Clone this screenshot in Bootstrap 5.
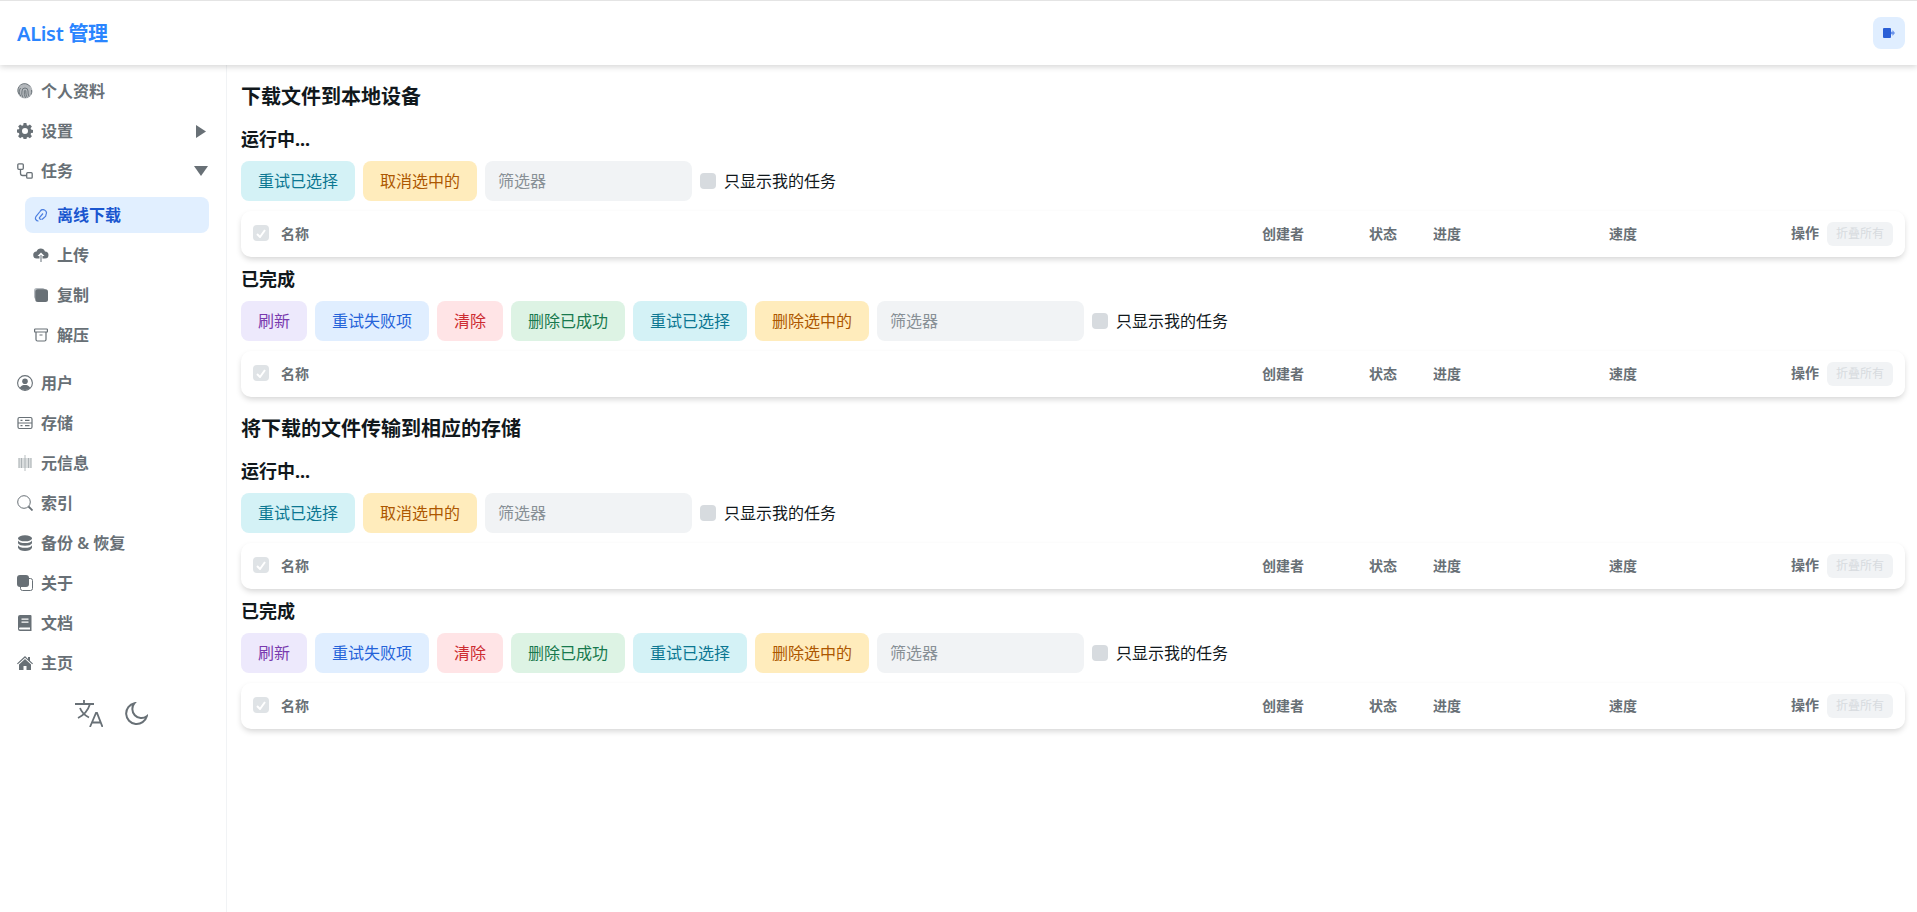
<!DOCTYPE html>
<html lang="zh-CN">
<head>
<meta charset="utf-8">
<title>AList 管理</title>
<link href="https://cdn.jsdelivr.net/npm/bootstrap@5.3.0/dist/css/bootstrap.min.css" rel="stylesheet">
<style>
html,body{height:100%;}
body{font-family:"Noto Sans","Noto Sans CJK SC",sans-serif;font-size:16px;color:#11181c;background:#fff;overflow:hidden;}
.top-bar{height:65px;border-top:1px solid #e4e4e4;box-shadow:0 2px 6px rgba(0,0,0,.16);position:relative;z-index:2;padding:0 12px 0 17px;background:#fff;}
.brand-name{font-size:20px;font-weight:600;color:#2a85ff;letter-spacing:-.3px;padding-top:2px;}
.logout-btn{width:32px;height:32px;border-radius:8px;background:#e0eeff;border:0;padding:0;}
.page-body{height:847px;}
.side-menu{width:227px;flex:none;border-right:1px solid #f1f3f5;padding:6px 0 0 0;}
.menu-row{height:40px;padding:0 17px;color:#687076;font-weight:600;font-size:16px;gap:8px;}
.menu-row svg.ic{width:16px;height:16px;flex:none;}
.menu-arrow{margin-left:auto;margin-right:1px;}
.arrow-side{margin-right:3px;}
.sub-menu{padding:6px 0;}
.sub-row{height:36px;margin:0 0 4px 25px;padding:0 8px;border-radius:8px;color:#687076;font-weight:600;gap:8px;width:184px;}
.sub-row svg{width:16px;flex:none;}
.sub-row.active-row{background:#e1efff;color:#1a56cf;}
.side-tools{gap:22px;padding:17px 3px 0 0;color:#687076;}
.work-area{flex:1;min-width:0;padding:17px 12px 0 14px;}
.sec-title{font-size:20px;font-weight:700;line-height:30px;margin:0 0 15px;}
.sub-title{font-size:18px;font-weight:700;line-height:24px;margin:0 0 10px;}
.tool-row{gap:8px;margin-bottom:10px;}
.act-btn{height:40px;border:0;border-radius:8px;padding:0 17px;font-size:16px;}
.tone-violet{background:#ede9fc;color:#793aaf;}
.tone-blue{background:#e0eeff;color:#2563d9;}
.tone-red{background:#ffe4e6;color:#cd2b31;}
.tone-green{background:#ddf3e4;color:#18794e;}
.tone-cyan{background:#d4f2f6;color:#0c7792;}
.tone-amber{background:#ffecbc;color:#ad5700;}
.filter-input{width:207px;height:40px;border:0;border-radius:8px;background:#f1f3f5;padding:0 13px;font-size:16px;}
.filter-input::placeholder{color:#889096;opacity:1;}
.mine-check{width:16px;height:16px;border-radius:4px;background:#d7dbdf;flex:none;}
.mine-label{gap:8px;color:#11181c;}
.task-card{height:46px;border-radius:10px;background:#fff;box-shadow:0 3px 6px -1px rgba(0,0,0,.18);padding:0 12px 2px;margin-bottom:10px;color:#687076;font-size:14px;font-weight:700;}
.head-check{width:16px;height:16px;border-radius:4px;background:#dfe3e6;flex:none;margin-right:12px;}
.cell-name{flex:1;}
.cell-owner{width:107px;flex:none;}
.cell-state{width:64px;flex:none;}
.cell-prog{width:176px;flex:none;}
.cell-speed{width:182px;flex:none;}
.cell-ops{width:102px;flex:none;gap:8px;}
.fold-btn{width:66px;height:24px;border:0;border-radius:6px;background:#f1f3f5;color:#d7dbdf;font-size:12px;padding:0;margin-top:1px;font-weight:400;}
.ops-label{position:relative;top:-1px;}
.group-gap{margin-top:17px;}
</style>
</head>
<body>
<header class="top-bar d-flex align-items-center justify-content-between">
  <span class="brand-name">AList 管理</span>
  <button class="logout-btn d-flex align-items-center justify-content-center" aria-label="退出">
    <svg width="12" height="10" viewBox="0 0 12 10"><rect x="0" y="0" width="8" height="10" rx="1" fill="#2a5fd6"/><path d="M8 3.800h1.500V2L12 5 9.500 8V6.200H8z" fill="#6c95ea"/></svg>
  </button>
</header>
<div class="page-body d-flex">
  <nav class="side-menu d-flex flex-column">
    <div class="menu-row d-flex align-items-center">
      <svg class="ic" viewBox="0 0 16 16" fill="none" stroke="#687076" stroke-width=".9"><circle cx="8" cy="8" r="7.500" fill="#b4b8bc" stroke="none"/><path d="M2 11A6.500 6.500 0 0 1 13 3.500M3.800 13A6 6 0 0 1 3.600 5M14 11.500A6.500 6.500 0 0 0 14.500 7M6 14.500A8 8 0 0 1 5 8a3 3 0 0 1 6 0c0 2 .2 4 1 5.500M8.500 15A12 12 0 0 1 7.300 8a.8.8 0 0 1 1.500 0c0 3 .5 5 1.500 6.500"/></svg>
      <span>个人资料</span></div>
    <div class="menu-row d-flex align-items-center">
      <svg class="ic" viewBox="0 0 16 16" fill="#687076"><path fill-rule="evenodd" d="M6.600 0h2.800l.4 2.200 1.200.5L12.900 1.400l2 2-1.300 1.900.5 1.200 1.900.4v2.800l-1.900.4-.5 1.200 1.300 1.900-2 2-1.900-1.300-1.200.5-.4 2.200H6.600l-.4-2.200-1.200-.5-1.900 1.300-2-2 1.300-1.900-.5-1.200L0 9.400V6.600l1.900-.4.500-1.200L1.100 3.400l2-2L5 2.700l1.200-.5zM8 5a3 3 0 1 0 0 6 3 3 0 0 0 0-6z"/></svg>
      <span>设置</span>
      <svg class="menu-arrow arrow-side" width="10" height="13" viewBox="0 0 10 13"><path d="M0 0l10 6.500L0 13z" fill="#687076"/></svg></div>
    <div class="menu-row d-flex align-items-center">
      <svg class="ic" viewBox="0 0 16 16" fill="none" stroke="#687076" stroke-width="1.300"><rect x=".8" y=".8" width="5.500" height="5.500" rx="1"/><rect x="9.700" y="9.700" width="5.500" height="5.500" rx="1"/><path d="M3.500 6.300v4q0 2.200 2.200 2.200h4"/></svg>
      <span>任务</span>
      <svg class="menu-arrow" width="14" height="10" viewBox="0 0 14 10"><path d="M0 0h14L7 10z" fill="#687076"/></svg></div>
    <div class="sub-menu">
      <div class="sub-row active-row d-flex align-items-center">
        <svg height="13" viewBox="0 0 13 13" fill="none" stroke="#4c7fe0" stroke-width="1.200"><path d="M4 12a2.800 2.800 0 0 1-2.600-4.300L5.500 2.500A3.300 3.300 0 0 1 11.500 5.500a3 3 0 0 1-1.500 2.700L7.500 10.500M8.500 4.500L5 8.500a1.300 1.300 0 0 0 2 1.500"/></svg>
        <span>离线下载</span></div>
      <div class="sub-row d-flex align-items-center">
        <svg height="14" viewBox="0 0 16 14"><path d="M4 10.500a3.500 3.500 0 0 1-.5-7A4.500 4.500 0 0 1 12 3.500a3.500 3.500 0 0 1 0 7H9.500V8h2L8 4.500 4.500 8h2v2.500z" fill="#687076"/><rect x="7.200" y="7" width="1.600" height="7" fill="#a0a6ab"/></svg>
        <span>上传</span></div>
      <div class="sub-row d-flex align-items-center">
        <svg height="14" viewBox="0 0 14 14"><rect x="0" y="0" width="11" height="11" rx="2.500" fill="#b5babf"/><rect x="1.300" y="1.300" width="12.700" height="12.700" rx="2.500" fill="#687076"/></svg>
        <span>复制</span></div>
      <div class="sub-row d-flex align-items-center">
        <svg height="14" viewBox="0 0 14 14" fill="none" stroke="#687076" stroke-width="1.200"><rect x=".6" y="1" width="12.800" height="3" rx=".6"/><path d="M2 4v7.500a1.500 1.500 0 0 0 1.500 1.500h7a1.500 1.500 0 0 0 1.500-1.500V4M5.500 7h3"/></svg>
        <span>解压</span></div>
    </div>
    <div class="menu-row d-flex align-items-center">
      <svg class="ic" viewBox="0 0 16 16"><circle cx="8" cy="8" r="7.400" fill="none" stroke="#687076" stroke-width="1.100"/><circle cx="8" cy="6.200" r="2.800" fill="#687076"/><path d="M2.800 12.800C4 10.500 6 10 8 10s4 .5 5.200 2.800A7 7 0 0 1 2.800 12.800z" fill="#687076"/></svg>
      <span>用户</span></div>
    <div class="menu-row d-flex align-items-center">
      <svg class="ic" viewBox="0 0 16 16" fill="none" stroke="#687076" stroke-width="1.200"><rect x="1" y="2.500" width="14" height="11" rx="1.500"/><path d="M1 8h14M3.500 5.300h2M3.500 10.700h2M8 5.300h4.500M8 10.700h4.500"/></svg>
      <span>存储</span></div>
    <div class="menu-row d-flex align-items-center">
      <svg class="ic" viewBox="0 0 16 16" fill="none" stroke="#9aa0a5" stroke-width=".7"><path d="M1.500 4h13M1.500 6h13M1.500 8h13M1.500 10h13M1.500 12h13M2 3v10M4.500 3v10M8 0v16M11.500 3v10M14 3v10"/></svg>
      <span>元信息</span></div>
    <div class="menu-row d-flex align-items-center">
      <svg class="ic" viewBox="0 0 16 16" fill="none" stroke="#687076"><circle cx="7" cy="7" r="6.300" stroke-width="1"/><path d="M11.500 11.500L15.500 15.500" stroke-width="1.800"/></svg>
      <span>索引</span></div>
    <div class="menu-row d-flex align-items-center">
      <svg class="ic" viewBox="0 0 16 16" fill="#687076"><ellipse cx="8" cy="3.300" rx="7" ry="3"/><path d="M1 5.500c1 2 3.500 2.600 7 2.600s6-.6 7-2.600v2.800c-.8 1.700-3.500 2.500-7 2.500s-6.200-.8-7-2.500zM1 10.300c1 1.900 3.500 2.500 7 2.500s6-.6 7-2.500v2.500C14 14.900 11.500 16 8 16s-6-1.100-7-3.200z"/></svg>
      <span>备份 &amp; 恢复</span></div>
    <div class="menu-row d-flex align-items-center">
      <svg class="ic" viewBox="0 0 16 16"><rect x="3.500" y="3.500" width="12" height="12" rx="2" fill="none" stroke="#687076"/><rect x="0" y="0" width="12" height="12" rx="3" fill="#687076"/></svg>
      <span>关于</span></div>
    <div class="menu-row d-flex align-items-center">
      <svg class="ic" viewBox="0 0 16 16" fill="#687076"><path fill-rule="evenodd" d="M3 0h10.500a1 1 0 0 1 1 1v15H3a2 2 0 0 1-2-2V2a2 2 0 0 1 2-2zM4.500 3.500v1.200h7V3.500zm0 3v1.200h7V6.500zM3 12.500a1 1 0 0 0 0 2h10v-2z"/></svg>
      <span>文档</span></div>
    <div class="menu-row d-flex align-items-center">
      <svg class="ic" viewBox="0 0 16 16" fill="#687076"><path d="M8 1L0 8.500l.8.800L8 2.800l7.200 6.500.8-.8-3-2.700V2h-2v2z"/><path d="M8 4L2 9.500V15h4.500v-4h3v4H14V9.500z"/></svg>
      <span>主页</span></div>
    <div class="side-tools d-flex justify-content-center align-items-center">
      <svg width="28" height="27" viewBox="0 0 28 27" fill="none" stroke="#687076" stroke-width="1.800"><path d="M0 4h19M9 0v4M15 4c-1.500 5-6 11-12 14M5 8c1.500 4 5 7.500 9 9.500M15 27l6-14h1l5.500 14M17 22.500h9"/></svg>
      <svg width="23" height="23" viewBox="0 0 23 23" fill="none" stroke="#687076" stroke-width="2"><path d="M9.500 1.200a10.500 10.500 0 1 0 12.300 13A9 9 0 0 1 9.500 1.200z"/></svg>
    </div>
  </nav>
  <main class="work-area">
    <h2 class="sec-title">下载文件到本地设备</h2>
    <h3 class="sub-title">运行中...</h3>
    <div class="tool-row d-flex align-items-center">
      <button class="act-btn tone-cyan">重试已选择</button>
      <button class="act-btn tone-amber">取消选中的</button>
      <input class="filter-input" placeholder="筛选器">
      <label class="mine-label d-flex align-items-center"><span class="mine-check"></span>只显示我的任务</label>
    </div>
    <div class="task-card d-flex align-items-center">
      <span class="head-check d-flex align-items-center justify-content-center"><svg width="10" height="9" viewBox="0 0 10 9" fill="none" stroke="#fff" stroke-width="2"><path d="M1 5l3 3 5-7"/></svg></span>
      <span class="cell-name">名称</span><span class="cell-owner">创建者</span><span class="cell-state">状态</span><span class="cell-prog">进度</span><span class="cell-speed">速度</span>
      <span class="cell-ops d-flex align-items-center"><span class="ops-label">操作</span><button class="fold-btn">折叠所有</button></span>
    </div>
    <h3 class="sub-title">已完成</h3>
    <div class="tool-row d-flex align-items-center">
      <button class="act-btn tone-violet">刷新</button>
      <button class="act-btn tone-blue">重试失败项</button>
      <button class="act-btn tone-red">清除</button>
      <button class="act-btn tone-green">删除已成功</button>
      <button class="act-btn tone-cyan">重试已选择</button>
      <button class="act-btn tone-amber">删除选中的</button>
      <input class="filter-input" placeholder="筛选器">
      <label class="mine-label d-flex align-items-center"><span class="mine-check"></span>只显示我的任务</label>
    </div>
    <div class="task-card d-flex align-items-center">
      <span class="head-check d-flex align-items-center justify-content-center"><svg width="10" height="9" viewBox="0 0 10 9" fill="none" stroke="#fff" stroke-width="2"><path d="M1 5l3 3 5-7"/></svg></span>
      <span class="cell-name">名称</span><span class="cell-owner">创建者</span><span class="cell-state">状态</span><span class="cell-prog">进度</span><span class="cell-speed">速度</span>
      <span class="cell-ops d-flex align-items-center"><span class="ops-label">操作</span><button class="fold-btn">折叠所有</button></span>
    </div>
    <h2 class="sec-title group-gap">将下载的文件传输到相应的存储</h2>
    <h3 class="sub-title">运行中...</h3>
    <div class="tool-row d-flex align-items-center">
      <button class="act-btn tone-cyan">重试已选择</button>
      <button class="act-btn tone-amber">取消选中的</button>
      <input class="filter-input" placeholder="筛选器">
      <label class="mine-label d-flex align-items-center"><span class="mine-check"></span>只显示我的任务</label>
    </div>
    <div class="task-card d-flex align-items-center">
      <span class="head-check d-flex align-items-center justify-content-center"><svg width="10" height="9" viewBox="0 0 10 9" fill="none" stroke="#fff" stroke-width="2"><path d="M1 5l3 3 5-7"/></svg></span>
      <span class="cell-name">名称</span><span class="cell-owner">创建者</span><span class="cell-state">状态</span><span class="cell-prog">进度</span><span class="cell-speed">速度</span>
      <span class="cell-ops d-flex align-items-center"><span class="ops-label">操作</span><button class="fold-btn">折叠所有</button></span>
    </div>
    <h3 class="sub-title">已完成</h3>
    <div class="tool-row d-flex align-items-center">
      <button class="act-btn tone-violet">刷新</button>
      <button class="act-btn tone-blue">重试失败项</button>
      <button class="act-btn tone-red">清除</button>
      <button class="act-btn tone-green">删除已成功</button>
      <button class="act-btn tone-cyan">重试已选择</button>
      <button class="act-btn tone-amber">删除选中的</button>
      <input class="filter-input" placeholder="筛选器">
      <label class="mine-label d-flex align-items-center"><span class="mine-check"></span>只显示我的任务</label>
    </div>
    <div class="task-card d-flex align-items-center">
      <span class="head-check d-flex align-items-center justify-content-center"><svg width="10" height="9" viewBox="0 0 10 9" fill="none" stroke="#fff" stroke-width="2"><path d="M1 5l3 3 5-7"/></svg></span>
      <span class="cell-name">名称</span><span class="cell-owner">创建者</span><span class="cell-state">状态</span><span class="cell-prog">进度</span><span class="cell-speed">速度</span>
      <span class="cell-ops d-flex align-items-center"><span class="ops-label">操作</span><button class="fold-btn">折叠所有</button></span>
    </div>
  </main>
</div>
<script src="https://cdn.jsdelivr.net/npm/bootstrap@5.3.0/dist/js/bootstrap.bundle.min.js"></script>
</body>
</html>
